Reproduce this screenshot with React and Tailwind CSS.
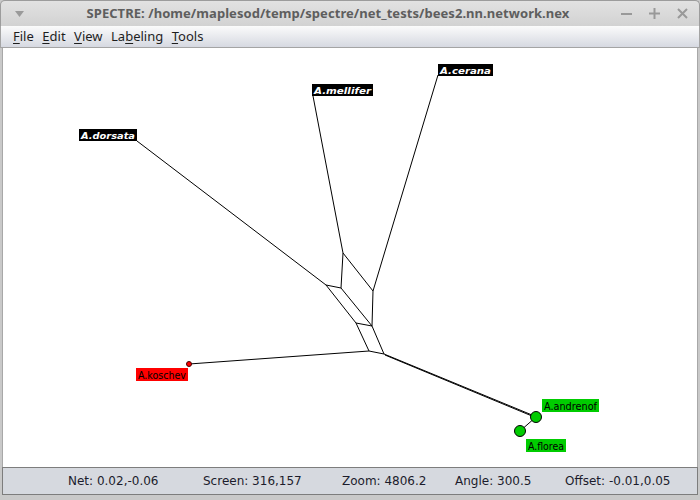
import React from 'react';

const X0 = 2;
const Y0 = 48;

const edges = [
  [136, 141, 325, 285],
  [312, 96, 342, 253],
  [437, 75, 372, 291],
  [342, 253, 340, 288],
  [342, 253, 372, 291],
  [325, 285, 340, 288],
  [325, 285, 355, 323],
  [340, 288, 371, 326],
  [372, 291, 371, 326],
  [355, 323, 371, 326],
  [355, 323, 368, 351],
  [371, 326, 383, 354],
  [368, 351, 383, 354],
  [188, 364, 368, 351],
  [383, 354, 531, 415],
  [384, 355, 531, 416],
  [535, 417, 519, 431],
];

const taxa = [
  { name: 'A.dorsata', x: 78, y: 129, w: 58 },
  { name: 'A.mellifer', x: 311, y: 84, w: 61 },
  { name: 'A.cerana', x: 437, y: 64, w: 55 },
];

const Network = () => (
  <svg width="693" height="420" className="block">
    <g transform={`translate(${-X0},${-Y0})`} fontFamily="DejaVu Sans, sans-serif">
      {edges.map(([x1, y1, x2, y2], i) => (
        <line key={i} x1={x1} y1={y1} x2={x2} y2={y2} stroke="#000" strokeWidth="1" />
      ))}
      {taxa.map((t) => (
        <g key={t.name}>
          <rect x={t.x} y={t.y} width={t.w} height={12} fill="#000" />
          <text x={t.x + 2} y={t.y + 9.5} fontSize="9" fontWeight="bold" fontStyle="italic" fill="#fff"
            textLength={t.w - 4} lengthAdjust="spacingAndGlyphs">{t.name}</text>
        </g>
      ))}
      <rect x="135" y="368" width="52" height="13" fill="#ff0000" />
      <text x="137" y="378.5" fontSize="10" fill="#000" textLength="48" lengthAdjust="spacingAndGlyphs">A.koschev</text>
      <circle cx="188" cy="364" r="2.5" fill="#ff0000" stroke="#400" strokeWidth="1" />

      <rect x="541" y="399" width="57" height="13" fill="#00cc00" />
      <text x="543" y="409.5" fontSize="10" fill="#000" textLength="53" lengthAdjust="spacingAndGlyphs">A.andrenof</text>
      <rect x="525" y="439" width="40" height="13" fill="#00cc00" />
      <text x="527" y="449.5" fontSize="10" fill="#000" textLength="36" lengthAdjust="spacingAndGlyphs">A.florea</text>
      <circle cx="535" cy="417" r="5.5" fill="#00cc00" stroke="#000" strokeWidth="1" />
      <circle cx="519" cy="431" r="5.5" fill="#00cc00" stroke="#000" strokeWidth="1" />
    </g>
  </svg>
);

const Menu = ({ first, rest, pre = '' }) => (
  <span>
    {pre}
    <span className="underline underline-offset-2">{first}</span>
    {rest}
  </span>
);

export default function App() {
  return (
    <div className="w-[700px] h-[500px] flex flex-col bg-[#c9c9c9] overflow-hidden" style={{ fontFamily: '"Noto Sans", sans-serif' }}>
      {/* title bar */}
      <div className="h-[26px] flex items-center rounded-t-[5px] border border-b-0 border-[#9c9c9c] bg-gradient-to-b from-[#e2e2e2] to-[#d2d2d2]">
        <div className="w-[36px] flex justify-center pl-[2px]">
          <svg width="10" height="6"><polygon points="0,0 9,0 4.5,6" fill="#9a9a9a" /></svg>
        </div>
        <div className="flex-1 text-center text-[13px] font-bold text-[#5e5e5e] tracking-[0.05px] whitespace-nowrap">
          SPECTRE: /home/maplesod/temp/spectre/net_tests/bees2.nn.network.nex
        </div>
        <div className="w-[80px] flex items-center gap-[17px] pl-[2px]">
          <svg width="11" height="11"><rect x="0" y="5" width="11" height="2" fill="#999" /></svg>
          <svg width="11" height="11"><rect x="0" y="4.5" width="11" height="2" fill="#999" /><rect x="4.5" y="0" width="2" height="11" fill="#999" /></svg>
          <svg width="11" height="11"><path d="M1 1 L10 10 M10 1 L1 10" stroke="#999" strokeWidth="2" /></svg>
        </div>
      </div>

      {/* menu bar */}
      <div className="h-[22px] flex items-center gap-[8.5px] pl-[12px] border-x border-b border-[#a4a4a4] bg-gradient-to-b from-[#fbfbfb] to-[#d6d9e1] text-[13px] text-[#1e1e1e]">
        <Menu first="F" rest="ile" />
        <Menu first="E" rest="dit" />
        <Menu first="V" rest="iew" />
        <Menu pre="La" first="b" rest="eling" />
        <Menu first="T" rest="ools" />
      </div>

      {/* canvas */}
      <div className="flex-1 mx-[2px] bg-white border-x border-[#a8a8a8] overflow-hidden">
        <Network />
      </div>

      {/* status bar */}
      <div className="h-[28px] mx-[2px] flex items-center pl-[65px] border border-[#7d7d7d] bg-[#d6d9df] text-[12px] text-[#1c1c2c]" style={{ fontFamily: '"DejaVu Sans", sans-serif' }}>
        <span className="w-[135px] whitespace-nowrap">Net: 0.02,-0.06</span>
        <span className="w-[139px] whitespace-nowrap">Screen: 316,157</span>
        <span className="w-[113px] whitespace-nowrap">Zoom: 4806.2</span>
        <span className="w-[110px] whitespace-nowrap">Angle: 300.5</span>
        <span className="whitespace-nowrap">Offset: -0.01,0.05</span>
      </div>
      <div className="h-[5px]" />
    </div>
  );
}
